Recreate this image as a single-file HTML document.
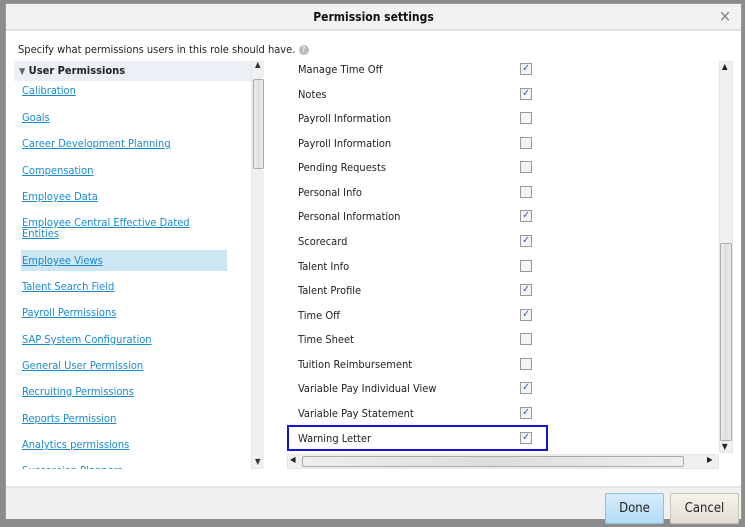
<!DOCTYPE html>
<html><head><style>
*{margin:0;padding:0;box-sizing:border-box}
body{width:745px;height:527px;overflow:hidden;background:#8c8c8c;font-family:"DejaVu Sans Condensed","Liberation Sans",sans-serif;font-size:11px;color:#222;position:relative}
.dlg{position:absolute;left:5px;top:3px;width:737px;height:516px;background:#fff;border:1px solid #9a9a9a}
.title{position:absolute;left:0;top:0;width:100%;height:27px;background:#f2f2f2;border-bottom:2px solid #e0e0e0;text-align:center;font-weight:bold;font-size:12px;line-height:26px;color:#111}
.x{position:absolute;right:10px;top:0;font-size:16px;color:#888;font-weight:normal}
.desc{position:absolute;left:12px;top:39px;font-size:11px}
.q{display:inline-block;width:10px;height:10px;border-radius:5px;background:#bbb;color:#fff;font-size:8px;text-align:center;line-height:10px;vertical-align:middle}
.lp{position:absolute;left:8px;top:57px;width:250px;height:408px;overflow:hidden}
.hdr{position:absolute;left:0;top:0;width:237px;height:20px;background:#eceff5;font-weight:bold;line-height:20px;padding-left:5px}
.a{position:absolute;left:8px;color:#1a8ad0;text-decoration:underline;white-space:nowrap;line-height:11px}
.hl{position:absolute;left:7px;top:189px;width:206px;height:21px;background:#cde6f4}
.vs{position:absolute;background:#f0f0f0;border:1px dotted #ddd}
.th{position:absolute;background:linear-gradient(90deg,#eee,#ddd,#eee);border:1px solid #aaa;border-radius:2px}
.r{position:absolute;left:292px;white-space:nowrap}
.cb{position:absolute;left:514px;width:12px;height:12px;border:1px solid #999;background:#f4f4f4;font-size:10px;color:#3355aa;line-height:10px;text-align:center}
.foot{position:absolute;left:0;top:482px;width:100%;height:33px;background:#f0f0f0;border-top:2px solid #e2e2e2}
.btn{position:absolute;top:5px;height:31px;font-size:13px;text-align:center;line-height:29px;border-radius:2px}
</style></head><body>
<div class="dlg">
<div class="title">Permission settings<span class="x">✕</span></div>
<div class="desc">Specify what permissions users in this role should have. <span class="q">?</span></div>
<div class="lp">
<div class="hdr"><span style="color:#666;font-size:9px">▼</span> User Permissions</div>
<div class="hl"></div>
<div class="a" style="top:24px">Calibration</div>
<div class="a" style="top:51px">Goals</div>
<div class="a" style="top:77px">Career Development Planning</div>
<div class="a" style="top:104px">Compensation</div>
<div class="a" style="top:130px">Employee Data</div>
<div class="a" style="top:156px">Employee Central Effective Dated</div>
<div class="a" style="top:167px">Entities</div>
<div class="a" style="top:194px">Employee Views</div>
<div class="a" style="top:220px">Talent Search Field</div>
<div class="a" style="top:246px">Payroll Permissions</div>
<div class="a" style="top:273px">SAP System Configuration</div>
<div class="a" style="top:299px">General User Permission</div>
<div class="a" style="top:325px">Recruiting Permissions</div>
<div class="a" style="top:352px">Reports Permission</div>
<div class="a" style="top:378px">Analytics permissions</div>
<div class="a" style="top:404px">Succession Planners</div>
<div class="vs" style="left:237px;top:0;width:14px;height:408px"></div>
<div class="th" style="left:239px;top:18px;width:11px;height:90px"></div>
<div style="position:absolute;left:241px;top:-1px;font-size:8px;color:#333">▲</div>
<div style="position:absolute;left:241px;top:396px;font-size:8px;color:#333">▼</div>
</div>
<div class="r" style="top:59px">Manage Time Off</div><div class="cb" style="top:59px">✓</div>
<div class="r" style="top:84px">Notes</div><div class="cb" style="top:84px">✓</div>
<div class="r" style="top:108px">Payroll Information</div><div class="cb" style="top:108px"></div>
<div class="r" style="top:133px">Payroll Information</div><div class="cb" style="top:133px"></div>
<div class="r" style="top:157px">Pending Requests</div><div class="cb" style="top:157px"></div>
<div class="r" style="top:182px">Personal Info</div><div class="cb" style="top:182px"></div>
<div class="r" style="top:206px">Personal Information</div><div class="cb" style="top:206px">✓</div>
<div class="r" style="top:231px">Scorecard</div><div class="cb" style="top:231px">✓</div>
<div class="r" style="top:256px">Talent Info</div><div class="cb" style="top:256px"></div>
<div class="r" style="top:280px">Talent Profile</div><div class="cb" style="top:280px">✓</div>
<div class="r" style="top:305px">Time Off</div><div class="cb" style="top:305px">✓</div>
<div class="r" style="top:329px">Time Sheet</div><div class="cb" style="top:329px"></div>
<div class="r" style="top:354px">Tuition Reimbursement</div><div class="cb" style="top:354px"></div>
<div class="r" style="top:378px">Variable Pay Individual View</div><div class="cb" style="top:378px">✓</div>
<div class="r" style="top:403px">Variable Pay Statement</div><div class="cb" style="top:403px">✓</div>
<div style="position:absolute;left:281px;top:421px;width:261px;height:26px;border:2px solid #1515d0"></div>
<div class="r" style="top:428px">Warning Letter</div><div class="cb" style="top:428px">✓</div>
<div class="vs" style="left:713px;top:57px;width:14px;height:392px"></div>
<div class="th" style="left:714px;top:239px;width:12px;height:198px"></div>
<div style="position:absolute;left:716px;top:58px;font-size:8px">▲</div>
<div style="position:absolute;left:716px;top:438px;font-size:8px">▼</div>
<div class="vs" style="left:281px;top:450px;width:432px;height:15px"></div>
<div class="th" style="left:296px;top:452px;width:382px;height:11px"></div>
<div style="position:absolute;left:284px;top:451px;font-size:8px">◀</div>
<div style="position:absolute;left:701px;top:451px;font-size:8px">▶</div>
<div class="foot">
<div class="btn" style="left:599px;width:59px;background:linear-gradient(#d6ecfb,#b5dcf6);border:1px solid #8cc4e8">Done</div>
<div class="btn" style="left:664px;width:69px;background:linear-gradient(#f6f4ee,#e3ded2);border:1px solid #c9c4b8">Cancel</div>
</div>
</div>
</body></html>
